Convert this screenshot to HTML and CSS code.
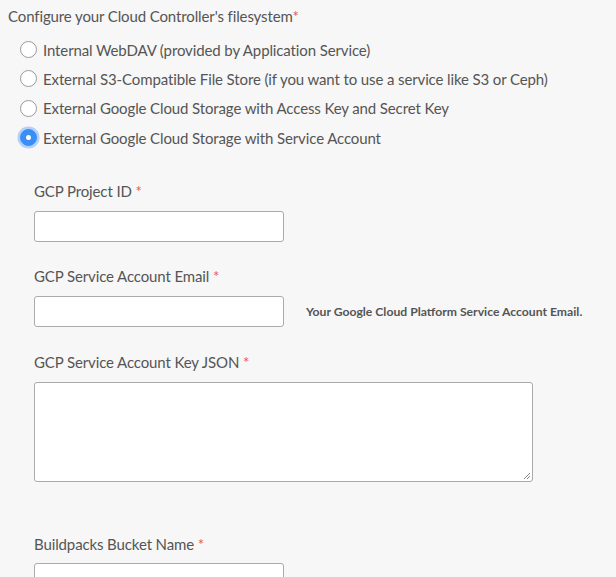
FILE: index.html
```html
<!DOCTYPE html>
<html>
<head>
<meta charset="utf-8">
<link rel="stylesheet" href="styles.css">
</head>
<body>
<div class="page">
  <div class="title">Configure your Cloud Controller's filesystem<span class="req">*</span></div>
  <div class="radios">
    <label class="radio-row"><span class="radio"></span><span>Internal WebDAV (provided by Application Service)</span></label>
    <label class="radio-row"><span class="radio"></span><span>External S3-Compatible File Store (if you want to use a service like S3 or Ceph)</span></label>
    <label class="radio-row"><span class="radio"></span><span>External Google Cloud Storage with Access Key and Secret Key</span></label>
    <label class="radio-row"><span class="radio checked"></span><span>External Google Cloud Storage with Service Account</span></label>
  </div>
  <div class="fields">
    <div class="field first">
      <div class="label">GCP Project ID <span class="req">*</span></div>
      <div class="control-row"><div class="input"></div></div>
    </div>
    <div class="field">
      <div class="label">GCP Service Account Email <span class="req">*</span></div>
      <div class="control-row"><div class="input"></div><div class="help">Your Google Cloud Platform Service Account Email.</div></div>
    </div>
    <div class="field json">
      <div class="label">GCP Service Account Key JSON <span class="req">*</span></div>
      <div class="control-row"><div class="textarea"><svg class="grip" width="8" height="8" viewBox="0 0 8 8"><path d="M7 1L1 7M7 4L4 7" stroke="#888" stroke-width="1"/></svg></div></div>
    </div>
    <div class="field last">
      <div class="label">Buildpacks Bucket Name <span class="req">*</span></div>
      <div class="control-row"><div class="input"></div></div>
    </div>
  </div>
</div>
</body>
</html>
```
FILE: styles.css
```css
html, body {
  margin: 0;
  padding: 0;
  background: #f7f7f7;
}
body {
  font-family: "Lato", "Open Sans", sans-serif;
  color: #555;
  font-size: 15px;
  letter-spacing: -0.12px;
  overflow: hidden;
  height: 577px;
}
.page {
  padding-top: 6px;
}
.title {
  padding-left: 8px;
  line-height: 20px;
  font-size: 15px;
}
.req {
  color: #e8564f;
}
.radios {
  margin-top: 9px;
  padding-left: 20px;
  display: flex;
  flex-direction: column;
}
.radio-row {
  display: flex;
  align-items: center;
  height: 29.3px;
  gap: 6px;
  font-size: 15px;
}
.radio {
  width: 15px;
  height: 15px;
  border: 1px solid #999;
  border-radius: 50%;
  background: #fff;
  flex: none;
  box-sizing: content-box;
}
.radio.checked {
  background: #3a8ef6;
  border-color: #3a8ef6;
  box-shadow: 0 0 0 2.5px rgba(80, 150, 245, 0.4);
  position: relative;
}
.radio.checked::after {
  content: "";
  position: absolute;
  left: 5px;
  top: 5px;
  width: 5px;
  height: 5px;
  border-radius: 50%;
  background: #fff;
}
.fields {
  padding-left: 34px;
  margin-top: 29px;
}
.field {
  margin-top: 24px;
}
.field.first {
  margin-top: 0;
}
.field.json {
  margin-top: 25px;
}
.field.last {
  margin-top: 52px;
}
.label {
  line-height: 20px;
  font-size: 15px;
  margin-bottom: 10px;
}
.field.last .label {
  margin-bottom: 9px;
}
.control-row {
  display: flex;
  align-items: center;
}
.input {
  width: 248px;
  height: 29px;
  background: #fff;
  border: 1px solid #aaa;
  border-radius: 3px;
  flex: none;
}
.help {
  margin-left: 22px;
  font-size: 12.2px;
  letter-spacing: 0;
  font-weight: bold;
  color: #555;
}
.textarea {
  width: 497px;
  height: 98px;
  background: #fff;
  border: 1px solid #aaa;
  border-radius: 3px;
  position: relative;
}
.grip {
  position: absolute;
  right: 1px;
  bottom: 1px;
}
```
